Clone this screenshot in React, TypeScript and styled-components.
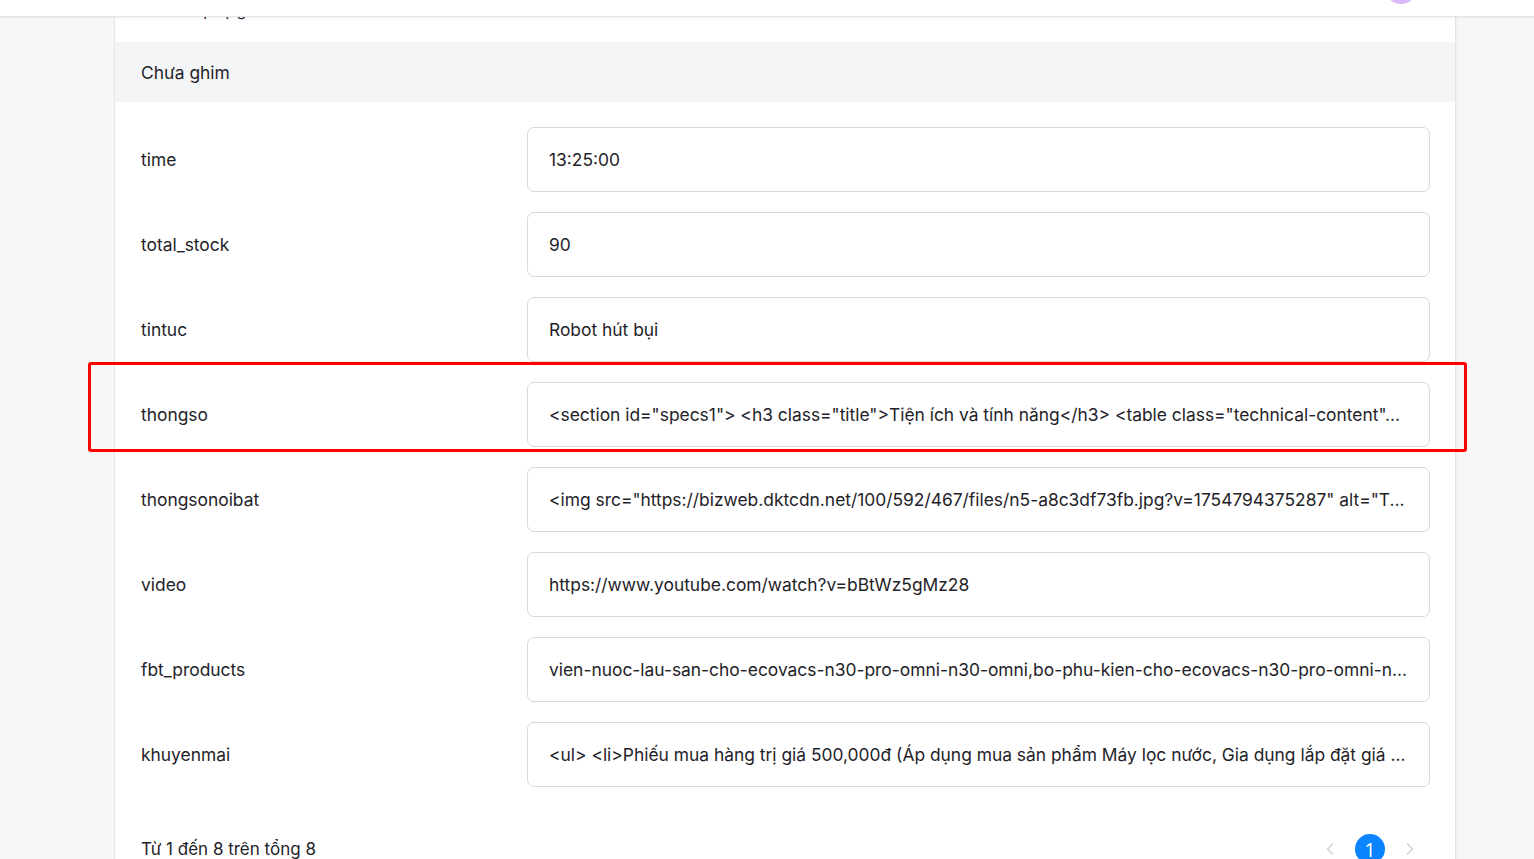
import React from 'react';
import styled, { createGlobalStyle } from 'styled-components';
import { ChevronLeft, ChevronRight } from 'lucide-react';

const GlobalStyle = createGlobalStyle`
  html, body {
    margin: 0;
    padding: 0;
    background: #f7f7f7;
    font-family: Inter, "Noto Sans", "Liberation Sans", sans-serif;
    color: #1f2329;
    overflow: hidden;
  }
  * {
    box-sizing: border-box;
  }
`;

const fields = [
  { key: 'time', value: '13:25:00' },
  { key: 'total_stock', value: '90' },
  { key: 'tintuc', value: 'Robot hút bụi' },
  {
    key: 'thongso',
    value:
      '<section id="specs1"> <h3 class="title">Tiện ích và tính năng</h3> <table class="technical-content"...',
    marked: true,
  },
  {
    key: 'thongsonoibat',
    value:
      '<img src="https://bizweb.dktcdn.net/100/592/467/files/n5-a8c3df73fb.jpg?v=1754794375287" alt="T...',
  },
  { key: 'video', value: 'https://www.youtube.com/watch?v=bBtWz5gMz28' },
  {
    key: 'fbt_products',
    value:
      'vien-nuoc-lau-san-cho-ecovacs-n30-pro-omni-n30-omni,bo-phu-kien-cho-ecovacs-n30-pro-omni-n...',
  },
  {
    key: 'khuyenmai',
    value:
      '<ul> <li>Phiếu mua hàng trị giá 500,000đ (Áp dụng mua sản phẩm Máy lọc nước, Gia dụng lắp đặt giá ...',
  },
];

const App = () => {
  return (
    <>
      <GlobalStyle />
      <TopBar>
        <Avatar />
      </TopBar>
      <Page>
        <Card>
          <CardTitle>Ghi chú phụ giá</CardTitle>
          <SectionHeader>Chưa ghim</SectionHeader>
          <FieldList>
            {fields.map((f) => (
              <FieldRow key={f.key}>
                <FieldLabel>{f.key}</FieldLabel>
                <FieldValue>{f.value}</FieldValue>
                {f.marked && <Highlight />}
              </FieldRow>
            ))}
          </FieldList>
          <Footer>
            <Summary>Từ 1 đến 8 trên tổng 8</Summary>
            <Pager>
              <PagerArrow>
                <ChevronLeft size={20} strokeWidth={2} />
              </PagerArrow>
              <PageDot $active>1</PageDot>
              <PagerArrow>
                <ChevronRight size={20} strokeWidth={2} />
              </PagerArrow>
            </Pager>
          </Footer>
        </Card>
      </Page>
    </>
  );
};

export default App;

const TopBar = styled.header`
  position: fixed;
  top: 0;
  left: 0;
  right: 0;
  height: 17px;
  background: #ffffff;
  border-bottom: 1px solid #e4e4e4;
  box-shadow: 0 1px 3px rgba(0, 0, 0, 0.06);
  display: flex;
  justify-content: flex-end;
  padding-right: 117px;
  overflow: hidden;
  z-index: 10;
`;

const Avatar = styled.div`
  width: 32px;
  height: 32px;
  margin-top: -28px;
  border-radius: 50%;
  background: #dbb8fb;
`;

const Page = styled.main`
  padding-left: 114px;
  width: 1456px;
`;

const Card = styled.section`
  background: #ffffff;
  border-left: 1px solid #e6e6e6;
  border-right: 1px solid #e3e3e3;
  box-shadow: 1px 0 3px rgba(0, 0, 0, 0.04);
  min-height: 900px;
`;

const CardTitle = styled.h2`
  margin: 0;
  height: 42px;
  padding: 0 26px;
  font-size: 16px;
  line-height: 20px;
  font-weight: 400;
`;

const SectionHeader = styled.div`
  height: 60px;
  display: flex;
  align-items: center;
  padding: 0 26px;
  background: #f4f5f7;
  font-size: 17.4px;
`;

const FieldList = styled.div`
  padding: 25px 25px 0 26px;
  display: flex;
  flex-direction: column;
  gap: 20px;
`;

const FieldRow = styled.div`
  position: relative;
  display: grid;
  grid-template-columns: 386px 1fr;
  align-items: center;
  height: 65px;
`;

const FieldLabel = styled.div`
  font-size: 17.4px;
`;

const FieldValue = styled.div`
  height: 65px;
  display: flex;
  align-items: center;
  padding: 0 21px;
  border: 1px solid #d9d9d9;
  border-radius: 7px;
  font-size: 17.4px;
  white-space: nowrap;
  overflow: hidden;
  text-overflow: ellipsis;
`;

const Highlight = styled.div`
  position: absolute;
  top: -20px;
  bottom: -5px;
  left: -53px;
  right: -37px;
  border: 3px solid #ff0000;
  border-radius: 3px;
  pointer-events: none;
`;

const Footer = styled.div`
  display: flex;
  justify-content: space-between;
  align-items: center;
  padding: 47px 30px 0 26px;
`;

const Summary = styled.div`
  font-size: 17px;
`;

const Pager = styled.div`
  display: flex;
  align-items: center;
  gap: 10px;
`;

const PagerArrow = styled.span`
  width: 30px;
  height: 30px;
  display: flex;
  align-items: center;
  justify-content: center;
  color: #d4d4d4;
`;

const PageDot = styled.span<{ $active?: boolean }>`
  width: 30px;
  height: 30px;
  border-radius: 50%;
  display: flex;
  align-items: center;
  justify-content: center;
  font-family: "Open Sans", Inter, sans-serif;
  font-size: 20px;
  background: ${({ $active }) => ($active ? '#0b84ff' : 'transparent')};
  color: ${({ $active }) => ($active ? '#ffffff' : '#333333')};
`;
